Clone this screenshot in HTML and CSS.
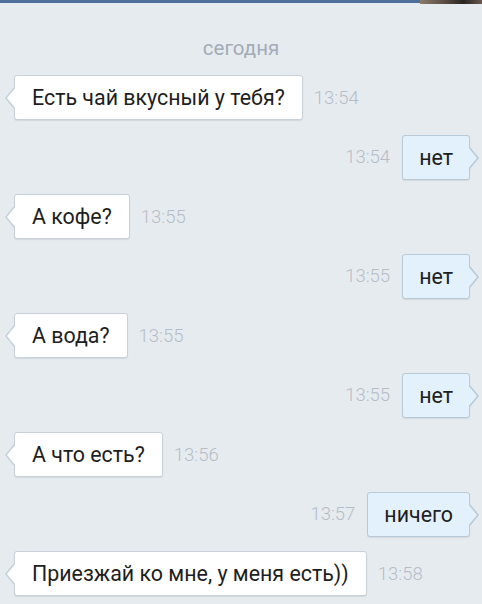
FILE: index.html
```html
<!DOCTYPE html>
<html lang="ru">

<head>
  <meta charset="UTF-8">
  <meta name="viewport" content="width=device-width, initial-scale=1.0">
  <title>Диалог</title>
  <link rel="stylesheet" href="styles.css">
</head>

<body>
  <div class="topBar"><span class="avatarStrip"></span></div>
  <div class="day">сегодня</div>
  <ul class="messages">
    <li class="msg in"><span class="bubble">Есть чай вкусный у тебя?</span><span class="time">13:54</span></li>
    <li class="msg out"><span class="time">13:54</span><span class="bubble">нет</span></li>
    <li class="msg in"><span class="bubble">А кофе?</span><span class="time">13:55</span></li>
    <li class="msg out"><span class="time">13:55</span><span class="bubble">нет</span></li>
    <li class="msg in"><span class="bubble">А вода?</span><span class="time">13:55</span></li>
    <li class="msg out"><span class="time">13:55</span><span class="bubble">нет</span></li>
    <li class="msg in"><span class="bubble">А что есть?</span><span class="time">13:56</span></li>
    <li class="msg out"><span class="time">13:57</span><span class="bubble">ничего</span></li>
    <li class="msg in"><span class="bubble">Приезжай ко мне, у меня есть))</span><span class="time">13:58</span></li>
  </ul>
</body>

</html>
```

FILE: styles.css
```css
* {
  margin: 0;
  padding: 0;
}

body {
  background-color: #e6ebf0;
  font-family: Roboto, "Noto Sans", sans-serif;
  width: 482px;
  height: 604px;
  overflow: hidden;
}

.topBar {
  height: 3px;
  background-color: #4d6f98;
  display: flex;
  justify-content: flex-end;
}

.avatarStrip {
  width: 62px;
  height: 4px;
  background: linear-gradient(90deg, #8a7a6a, #5a4d44 40%, #2a2420 70%, #6a5a50);
}

.day {
  margin-top: 35px;
  height: 20px;
  line-height: 20px;
  text-align: center;
  font-size: 20.5px;
  color: #a4acb7;
}

.messages {
  list-style: none;
  margin-top: 17px;
  display: flex;
  flex-direction: column;
  gap: 14.5px;
}

.msg {
  display: flex;
  align-items: center;
  height: 45px;
}

.msg.in {
  padding-left: 14px;
}

.msg.out {
  justify-content: flex-end;
  padding-right: 12px;
}

.bubble {
  position: relative;
  box-sizing: border-box;
  height: 45px;
  line-height: 43px;
  padding: 0 17px;
  font-size: 21.4px;
  color: #1e1e1e;
  background-color: #fff;
  border: 1px solid #c8d0d9;
  border-radius: 3px;
  box-shadow: 0 1px 1px rgba(0, 0, 0, 0.08);
}

.out .bubble {
  padding: 0 16px;
  background-color: #e2f1fb;
  border-color: #b8c9d7;
}

/* хвостик */
.bubble::before,
.bubble::after {
  content: "";
  position: absolute;
  top: 11px;
  border-style: solid;
  border-width: 11px 9px;
}

.in .bubble::before {
  left: -19px;
  border-color: transparent #c8d0d9 transparent transparent;
}

.in .bubble::after {
  left: -17px;
  border-color: transparent #fff transparent transparent;
}

.out .bubble::before {
  right: -19px;
  border-color: transparent transparent transparent #b8c9d7;
}

.out .bubble::after {
  right: -17px;
  border-color: transparent transparent transparent #e2f1fb;
}

.time {
  font-size: 18.5px;
  font-weight: 300;
  color: #b6bdc7;
}

.in .time {
  margin-left: 11px;
}

.out .time {
  margin-right: 12px;
}
```
